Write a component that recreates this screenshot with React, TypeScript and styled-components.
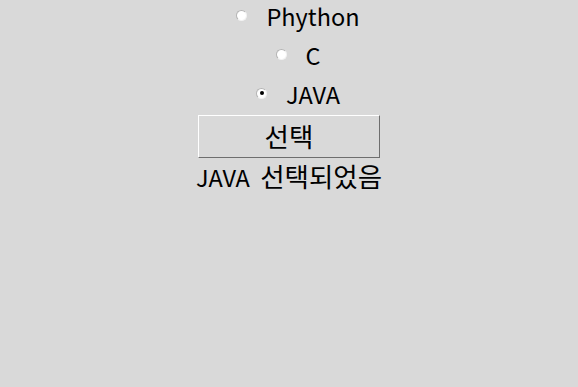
import React, { FC, useState } from 'react';
import styled, { createGlobalStyle } from 'styled-components';

const Global = createGlobalStyle`
    html, body {
        margin: 0;
        padding: 0;
        background: #d9d9d9;
    }
    body {
        width: 578px;
        height: 387px;
        overflow: hidden;
        font-family: "Noto Sans CJK KR", "Liberation Sans", sans-serif;
        color: #000;
    }
`;

const Window = styled.div`
    width: 578px;
    height: 387px;
    display: flex;
    flex-direction: column;
    align-items: center;
    background: #d9d9d9;
`;

const Choices = styled.div`
    display: flex;
    flex-direction: column;
    align-items: center;
    gap: 4px;
    margin-top: -2px;
`;

const Row = styled.label`
    display: flex;
    align-items: center;
    height: 35px;
    padding-left: 18px;
    gap: 19px;
    font-size: 23.5px;
    line-height: 34px;
    cursor: pointer;
`;

const Dot = styled.span<{ $on: boolean }>`
    width: 11px;
    height: 11px;
    margin-top: -1px;
    box-sizing: border-box;
    border-radius: 50%;
    background: #fff;
    border: 1px solid;
    border-color: #b4b4b4 #f2f2f2 #f2f2f2 #b4b4b4;
    display: flex;
    align-items: center;
    justify-content: center;

    &::after {
        content: '';
        width: 4px;
        height: 4px;
        border-radius: 50%;
        background: ${(p) => (p.$on ? '#000' : 'transparent')};
    }
`;

const Hangul = styled.span<{ $gap?: boolean }>`
    font-size: 26.5px;
    margin-left: ${(p) => (p.$gap ? '5px' : '0')};
`;

const Button = styled.button`
    margin-top: 4px;
    width: 182px;
    height: 43px;
    box-sizing: border-box;
    background: #d9d9d9;
    border: 1px solid;
    border-color: #fff #6e6e6e #6e6e6e #fff;
    font-family: inherit;
    font-size: 23.5px;
    line-height: 40px;
    color: #000;
    padding: 0;
`;

const Result = styled.div`
    height: 38px;
    line-height: 36px;
    font-size: 23.5px;
`;

const langs = ['Phython', 'C', 'JAVA'];

const App: FC = () => {
    const [pick, setPick] = useState('JAVA');
    const [done, setDone] = useState('JAVA');
    return (
        <Window>
            <Global />
            <Choices>
                {langs.map((l) => (
                    <Row key={l} onClick={() => setPick(l)}>
                        <Dot $on={pick === l} />
                        <span>{l}</span>
                    </Row>
                ))}
            </Choices>
            <Button onClick={() => setDone(pick)}>
                <Hangul>선택</Hangul>
            </Button>
            <Result>
                {done} <Hangul $gap>선택되었음</Hangul>
            </Result>
        </Window>
    );
};

export default App;
